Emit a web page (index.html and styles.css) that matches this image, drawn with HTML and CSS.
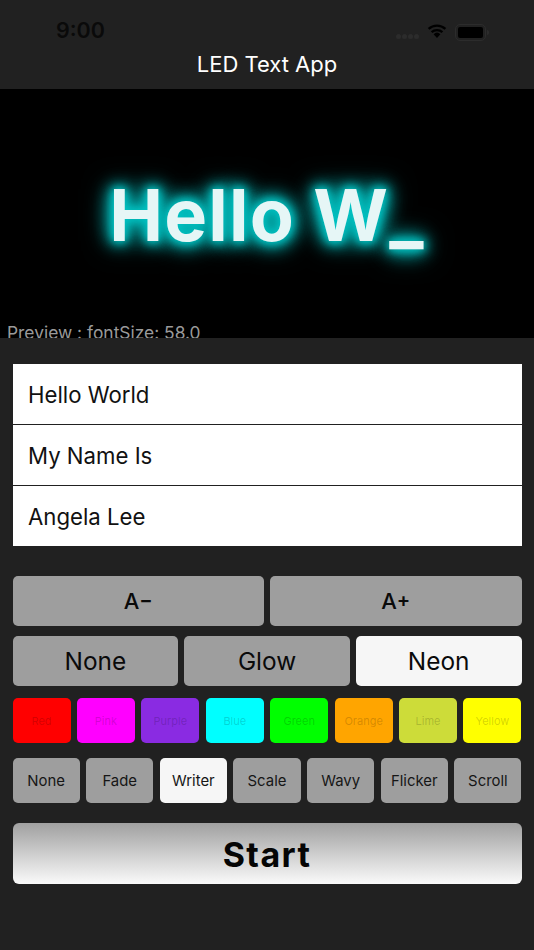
FILE: index.html
```html
<!DOCTYPE html>
<html lang="en">
<head>
<meta charset="utf-8">
<title>LED Text App</title>
<link rel="stylesheet" href="styles.css">
</head>
<body>
<div class="app">
  <header class="header">
    <div class="status">
      <span class="time">9:00</span>
      <div class="status-icons">
        <div class="dots"><i></i><i></i><i></i><i></i></div>
        <svg class="wifi" width="20" height="15" viewBox="0 0 20 15"><path d="M10 15 6.6 11.2a5 5 0 0 1 6.8 0Z" fill="#000"/><path d="M4.6 9.2a8 8 0 0 1 10.8 0M1.6 5.9a12.4 12.4 0 0 1 16.8 0" fill="none" stroke="#000" stroke-width="2.3"/></svg>
        <div class="battery"><div class="battery-fill"></div></div>
        <div class="battery-cap"></div>
      </div>
    </div>
    <h1 class="title">LED Text App</h1>
  </header>
  <section class="preview">
    <div class="led">Hello W_</div>
    <div class="preview-label">Preview : fontSize: 58.0</div>
  </section>
  <main class="controls">
    <div class="fields">
      <div class="field">Hello World</div>
      <div class="field">My Name Is</div>
      <div class="field">Angela Lee</div>
    </div>
    <div class="row row-size">
      <button class="btn btn-size">A<span class="sign">−</span></button>
      <button class="btn btn-size">A<span class="sign">+</span></button>
    </div>
    <div class="row row-effect">
      <button class="btn btn-effect">None</button>
      <button class="btn btn-effect">Glow</button>
      <button class="btn btn-effect active">Neon</button>
    </div>
    <div class="row row-color">
      <button class="swatch red">Red</button>
      <button class="swatch pink">Pink</button>
      <button class="swatch purple">Purple</button>
      <button class="swatch blue">Blue</button>
      <button class="swatch green">Green</button>
      <button class="swatch orange">Orange</button>
      <button class="swatch lime">Lime</button>
      <button class="swatch yellow">Yellow</button>
    </div>
    <div class="row row-anim">
      <button class="btn btn-anim">None</button>
      <button class="btn btn-anim">Fade</button>
      <button class="btn btn-anim active">Writer</button>
      <button class="btn btn-anim">Scale</button>
      <button class="btn btn-anim">Wavy</button>
      <button class="btn btn-anim">Flicker</button>
      <button class="btn btn-anim">Scroll</button>
    </div>
    <button class="start">Start</button>
  </main>
</div>
</body>
</html>
```

FILE: styles.css
```css
* { box-sizing: border-box; }
html, body { margin: 0; padding: 0; }
body { background: #212121; font-family: Inter, "Liberation Sans", sans-serif; }
.app { width: 534px; height: 950px; overflow: hidden; background: #212121; }

.header { height: 89px; display: flex; flex-direction: column; }
.status { height: 44px; padding: 16px 45px 0 56px; display: flex; justify-content: space-between; align-items: flex-start; }
.time { font-size: 21.5px; line-height: 28px; font-weight: 600; color: #0a0a0a; }
.status-icons { display: flex; align-items: center; height: 28px; margin-top: 2px; }
.dots { display: flex; gap: 1px; margin-right: 8px; margin-top: 9px; }
.dots i { width: 5px; height: 5px; border-radius: 50%; background: #2c2c2c; display: block; }
.wifi { margin-right: 8px; margin-top: -3px; }
.battery { width: 31px; height: 17px; border: 1.5px solid #2c2c2c; border-radius: 5px; padding: 2px; }
.battery-fill { width: 100%; height: 100%; background: #000; border-radius: 2px; }
.battery-cap { width: 2px; height: 5px; background: #2c2c2c; margin-left: 1px; border-radius: 0 2px 2px 0; }
.title { margin: 0; text-align: center; font-size: 22px; line-height: 28px; font-weight: 400; color: #fff; margin-top: 6px; }

.preview { position: relative; height: 249px; background: #000; overflow: hidden; display: flex; justify-content: center; padding-top: 84px; }
.led { font-size: 72px; line-height: 84px; font-weight: 700; letter-spacing: 1.2px; color: #e6f6f6; white-space: pre;
  text-shadow: 0 0 8px #00c4c4, 0 0 12px #00bcbc, 0 0 16px #00b4b4, 0 0 20px #00a8a8, 0 0 24px #009c9c, 0 0 30px #008484; }
.preview-label { position: absolute; left: 7px; bottom: -2px; font-size: 17.4px; line-height: 14px; color: #9a9a9a; white-space: nowrap; }

.controls { padding: 25.5px 12.5px 0; display: flex; flex-direction: column; }
.fields { display: flex; flex-direction: column; gap: 1px; margin-bottom: 30px; }
.field { height: 60px; background: #fff; color: #111; font-size: 22.2px; line-height: 61px; padding-left: 15.5px; }
.row { display: flex; }
.btn { border: 0; padding: 1px 0 0; border-radius: 5px; background: #9e9e9e; color: #0a0a0a; font-family: inherit; flex: 1 1 0; min-width: 0; text-align: center; }
.btn.active { background: #f6f6f6; }

.row-size { gap: 6px; height: 50px; margin-bottom: 10px; }
.btn-size { font-size: 22px; font-weight: 500; }
.sign { font-size: 20px; font-weight: 600; position: relative; top: -2px; }

.row-effect { gap: 6px; height: 50px; margin-bottom: 12px; }
.btn-effect { font-size: 24.4px; }

.row-color { gap: 6.4px; height: 45px; margin-bottom: 15px; }
.swatch { flex: 1 1 0; min-width: 0; border: 0; padding: 1px 0 0; border-radius: 5px; font-family: inherit; font-size: 11px; color: rgba(0,0,0,.18); }
.red { background: #ff0000; }
.pink { background: #ff00ff; }
.purple { background: #8a2be2; }
.blue { background: #00ffff; }
.green { background: #00ff00; }
.orange { background: #ffa500; }
.lime { background: #cddc39; }
.yellow { background: #ffff00; }

.row-anim { gap: 6.4px; height: 45px; margin-bottom: 20px; }
.btn-anim { font-size: 14.9px; color: #161616; }

.start { height: 61px; border: 0; padding: 2px 0 0; border-radius: 6px; background: linear-gradient(#a0a0a0, #fafafa); color: #050505; font-family: inherit; font-size: 34px; font-weight: 700; letter-spacing: 1.4px; }
```
